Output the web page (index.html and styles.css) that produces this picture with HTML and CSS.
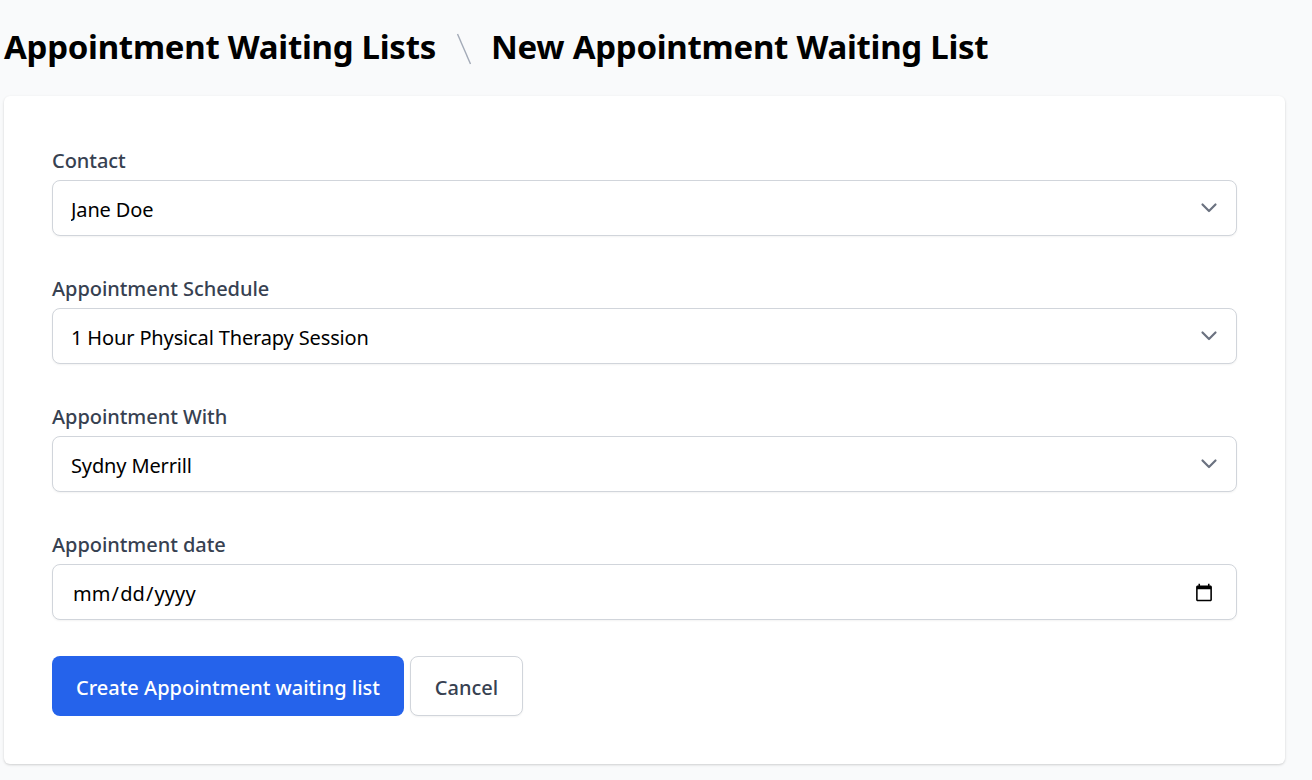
FILE: index.html
```html
<!DOCTYPE html>
<html lang="en">
<head>
<meta charset="utf-8">
<title>New Appointment Waiting List</title>
<link rel="stylesheet" href="styles.css">
</head>
<body>
<main class="page">
  <h1 class="crumbs">
    <span>Appointment Waiting Lists</span>
    <svg class="slash" width="16" height="32" viewBox="0 0 16 32" aria-hidden="true"><path d="M1.5 1 14.5 31" fill="none" stroke="#a3aab7" stroke-width="1.4"/></svg>
    <span>New Appointment Waiting List</span>
  </h1>
  <form class="card">
    <div class="field">
      <label class="label" for="contact">Contact</label>
      <div class="select-wrap">
        <select id="contact" class="control"><option>Jane Doe</option></select>
        <svg class="chevron" width="24" height="24" viewBox="0 0 24 24" aria-hidden="true"><path d="M5.5 8.5 12 15l6.5-6.5" fill="none" stroke="#6b7280" stroke-width="2.2" stroke-linecap="round" stroke-linejoin="round"/></svg>
      </div>
    </div>
    <div class="field">
      <label class="label" for="schedule">Appointment Schedule</label>
      <div class="select-wrap">
        <select id="schedule" class="control"><option>1 Hour Physical Therapy Session</option></select>
        <svg class="chevron" width="24" height="24" viewBox="0 0 24 24" aria-hidden="true"><path d="M5.5 8.5 12 15l6.5-6.5" fill="none" stroke="#6b7280" stroke-width="2.2" stroke-linecap="round" stroke-linejoin="round"/></svg>
      </div>
    </div>
    <div class="field">
      <label class="label" for="with">Appointment With</label>
      <div class="select-wrap">
        <select id="with" class="control"><option>Sydny Merrill</option></select>
        <svg class="chevron" width="24" height="24" viewBox="0 0 24 24" aria-hidden="true"><path d="M5.5 8.5 12 15l6.5-6.5" fill="none" stroke="#6b7280" stroke-width="2.2" stroke-linecap="round" stroke-linejoin="round"/></svg>
      </div>
    </div>
    <div class="field">
      <label class="label" for="date">Appointment date</label>
      <input id="date" class="control date" type="date">
    </div>
    <div class="actions">
      <button type="button" class="btn primary">Create Appointment waiting list</button>
      <button type="button" class="btn secondary">Cancel</button>
    </div>
  </form>
</main>
</body>
</html>
```

FILE: styles.css
```css
* { box-sizing: border-box; }
html, body { margin: 0; height: 100%; }
body {
  background: #f9fafb;
  color: #000;
  font-family: "Noto Sans", "Open Sans", sans-serif;
  overflow: hidden;
}
.page { padding: 27px 27px 0 4px; }
.crumbs {
  margin: 0 0 29px;
  height: 40px;
  display: flex;
  align-items: center;
  gap: 19.5px;
  font-size: 33px;
  line-height: 40px;
  font-weight: 700;
  letter-spacing: -0.27px;
}
.slash { margin-top: 4px; }
.card {
  background: #fff;
  border-radius: 6px;
  box-shadow: 0 1px 3px rgba(0,0,0,.12), 0 1px 2px rgba(0,0,0,.06);
  height: 668px;
  padding: 52px 48px 0;
  display: flex;
  flex-direction: column;
  gap: 40px;
}
.field { display: flex; flex-direction: column; }
.label {
  height: 32px;
  line-height: 26px;
  font-size: 20px;
  font-weight: 500;
  letter-spacing: -0.05px;
  color: #374151;
}
.select-wrap { position: relative; }
.control {
  display: block;
  width: 100%;
  height: 56px;
  border: 1px solid #d1d5db;
  border-radius: 8px;
  background: #fff;
  box-shadow: 0 1px 2px rgba(0,0,0,.05);
  padding: 2px 18px 0;
  font-family: inherit;
  font-size: 20px;
  letter-spacing: -0.14px;
  color: #000;
  appearance: none;
  -webkit-appearance: none;
  outline: none;
}
.chevron { position: absolute; right: 16px; top: 16px; pointer-events: none; }
.date { padding: 2px 20px 0 19px; letter-spacing: 0.1px; }
.actions { display: flex; gap: 6px; margin-top: -4px; }
.btn {
  height: 60px;
  border-radius: 8px;
  font-family: inherit;
  font-size: 20px;
  font-weight: 500;
  padding: 2px 0 0;
}
.primary { background: #2563eb; color: #fff; border: 0; width: 352px; }
.secondary { background: #fff; color: #374151; border: 1px solid #d1d5db; width: 113px; box-shadow: 0 1px 2px rgba(0,0,0,.05); }
```
